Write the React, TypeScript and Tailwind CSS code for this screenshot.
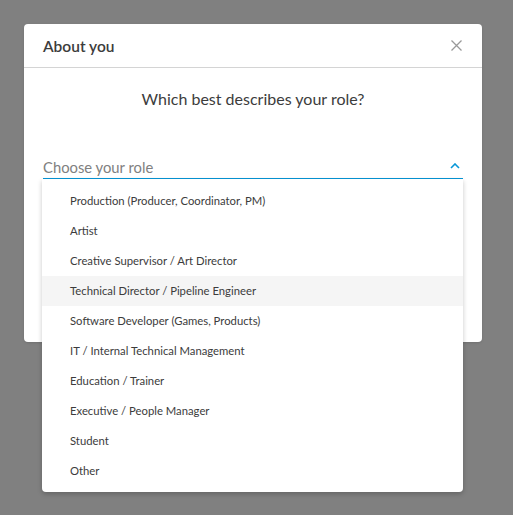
import { useState } from "react";

const ROLES = [
  "Production (Producer, Coordinator, PM)",
  "Artist",
  "Creative Supervisor / Art Director",
  "Technical Director / Pipeline Engineer",
  "Software Developer (Games, Products)",
  "IT / Internal Technical Management",
  "Education / Trainer",
  "Executive / People Manager",
  "Student",
  "Other",
];

const App = () => {
  const [hovered, setHovered] = useState<number>(3);

  return (
    <div
      className="min-h-[515px] w-full bg-[#808080] pt-[24px] pl-[24px]"
      style={{ fontFamily: "Lato, 'Open Sans', sans-serif" }}
    >
      <div className="w-[458px] h-[318px] bg-white rounded-[4px] shadow-sm">
        {/* header */}
        <div className="h-[44px] flex items-center justify-between pl-[19px] pr-[20px] border-b border-[#d4d4d4]">
          <span className="text-[15.5px] font-semibold text-[#3c3c3c] pt-[3px]">
            About you
          </span>
          <button className="w-[12px] h-[12px] flex items-center justify-center">
            <svg width="11" height="11" viewBox="0 0 11 11">
              <path
                d="M0.5 0.5 L10.5 10.5 M10.5 0.5 L0.5 10.5"
                stroke="#999"
                strokeWidth="1.3"
              />
            </svg>
          </button>
        </div>

        {/* body */}
        <div className="px-[19px] pt-[21px]">
          <p className="text-center text-[16px] text-[#3c3c3c] leading-[20px]">
            Which best describes your role?
          </p>

          <div className="relative mt-[48px]">
            <div className="flex items-center justify-between h-[22px] border-b border-[#0696d7]">
              <span className="text-[14.8px] text-[#808080] leading-[20px] mb-[2px]">
                Choose your role
              </span>
              <svg width="10" height="6" viewBox="0 0 10 6" className="mr-[3px] mb-[4px]">
                <path d="M1 5 L5 1 L9 5" fill="none" stroke="#0696d7" strokeWidth="1.6" />
              </svg>
            </div>

            {/* dropdown */}
            <div className="absolute left-[-1px] right-0 top-full bg-white rounded-b-[4px] shadow-[0_2px_5px_rgba(0,0,0,0.22)] pt-[7px] pb-[6px] z-10">
              {ROLES.map((role, i) => (
                <div
                  key={role}
                  onMouseEnter={() => setHovered(i)}
                  className={`h-[30px] flex items-center pl-[28px] text-[11.3px] text-[#3c3c3c] ${
                    hovered === i ? "bg-[#f5f5f5]" : ""
                  }`}
                >
                  {role}
                </div>
              ))}
            </div>
          </div>
        </div>
      </div>
    </div>
  );
};

export default App;
